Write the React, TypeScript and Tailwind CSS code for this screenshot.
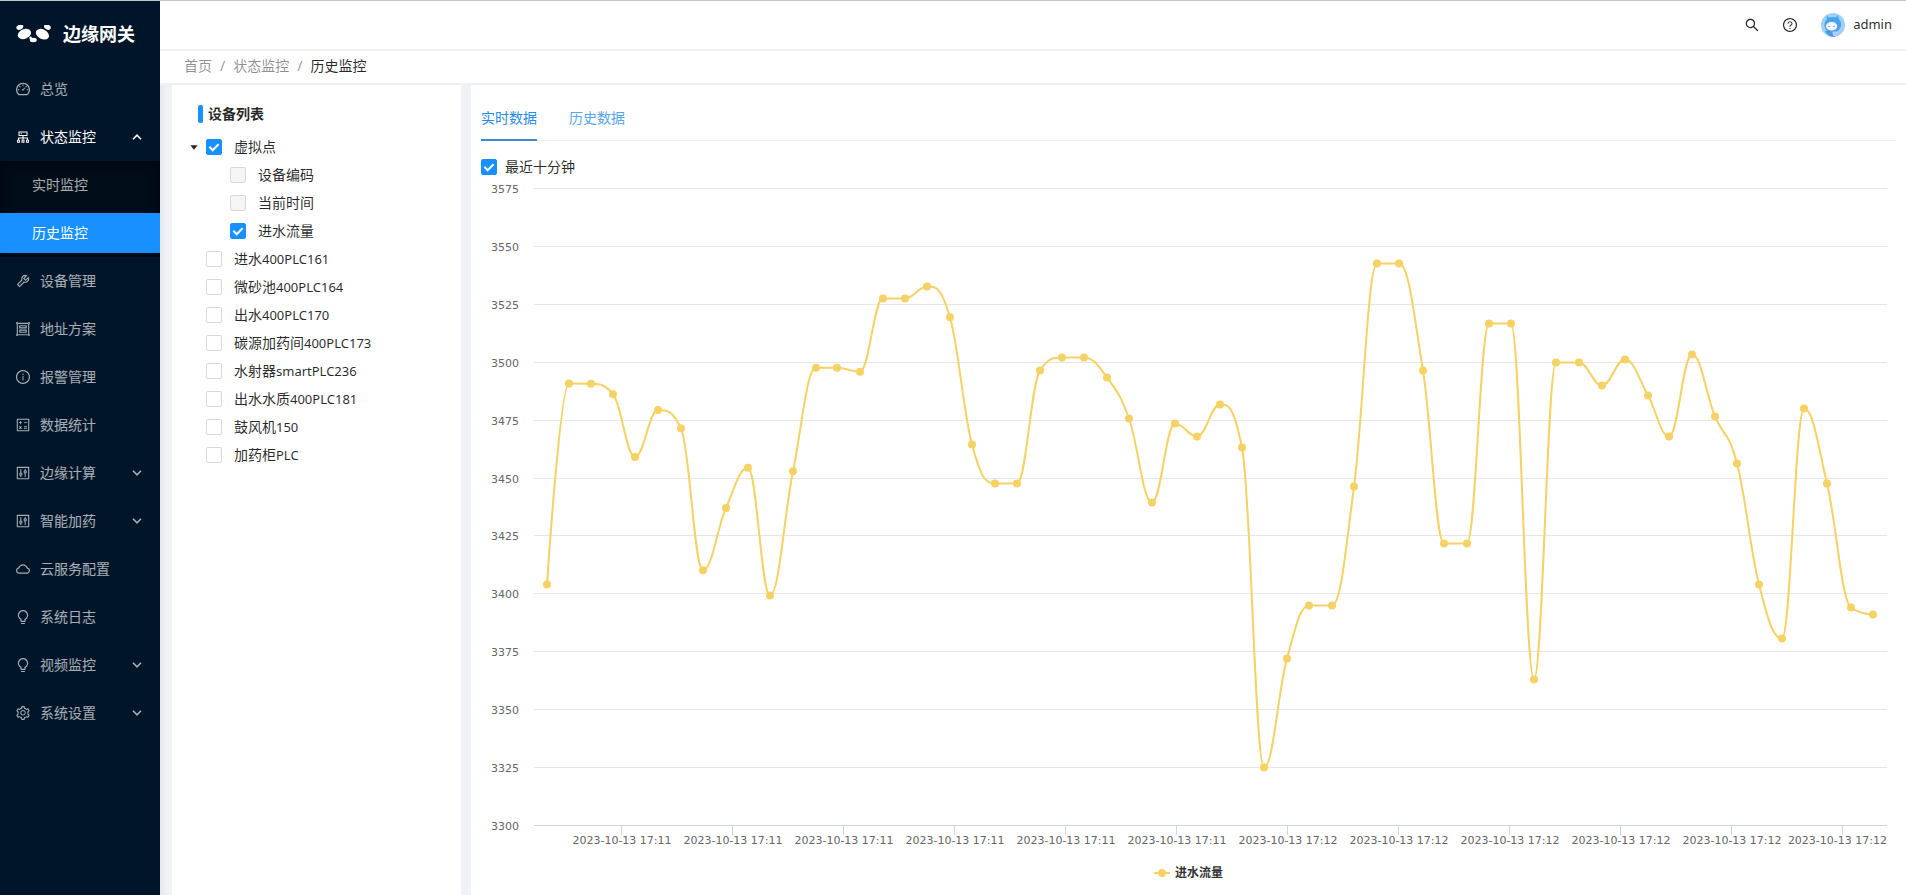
import { useState } from "react";
import type { IconType } from "react-icons";
import {
  AiOutlineBulb,
  AiOutlineCalculator,
  AiOutlineCloud,
  AiOutlineCluster,
  AiOutlineControl,
  AiOutlineDashboard,
  AiOutlineGroup,
  AiOutlineInfoCircle,
  AiOutlineQuestionCircle,
  AiOutlineSearch,
  AiOutlineSetting,
  AiOutlineTool,
} from "react-icons/ai";

type MenuItem = {
  label: string;
  icon: IconType;
  expandable?: boolean;
  open?: boolean;
  children?: { label: string; active?: boolean }[];
};

const menu: MenuItem[] = [
  { label: "总览", icon: AiOutlineDashboard },
  {
    label: "状态监控",
    icon: AiOutlineCluster,
    expandable: true,
    open: true,
    children: [{ label: "实时监控" }, { label: "历史监控", active: true }],
  },
  { label: "设备管理", icon: AiOutlineTool },
  { label: "地址方案", icon: AiOutlineGroup },
  { label: "报警管理", icon: AiOutlineInfoCircle },
  { label: "数据统计", icon: AiOutlineCalculator },
  { label: "边缘计算", icon: AiOutlineControl, expandable: true },
  { label: "智能加药", icon: AiOutlineControl, expandable: true },
  { label: "云服务配置", icon: AiOutlineCloud },
  { label: "系统日志", icon: AiOutlineBulb },
  { label: "视频监控", icon: AiOutlineBulb, expandable: true },
  { label: "系统设置", icon: AiOutlineSetting, expandable: true },
];

type Device = {
  id: string;
  name: string;
  code?: string;
  child?: boolean;
  expanded?: boolean;
  checked?: boolean;
  disabled?: boolean;
};

const devices: Device[] = [
  { id: "virtual", name: "虚拟点", expanded: true, checked: true },
  { id: "device-code", name: "设备编码", child: true, disabled: true },
  { id: "current-time", name: "当前时间", child: true, disabled: true },
  { id: "inflow", name: "进水流量", child: true, checked: true },
  { id: "plc161", name: "进水", code: "400PLC161" },
  { id: "plc164", name: "微砂池", code: "400PLC164" },
  { id: "plc170", name: "出水", code: "400PLC170" },
  { id: "plc173", name: "碳源加药间", code: "400PLC173" },
  { id: "plc236", name: "水射器", code: "smartPLC236" },
  { id: "plc181", name: "出水水质", code: "400PLC181" },
  { id: "fan150", name: "鼓风机", code: "150" },
  { id: "dosing", name: "加药柜", code: "PLC" },
];

// [x offset in the plot, flow value]
const series: [number, number][] = [
  [66, 3403.8], [88, 3490.6], [110, 3490.5], [132, 3486], [154, 3458.9],
  [177, 3479.2], [200, 3471.3], [222, 3410], [245, 3436.9], [267, 3454.2],
  [289, 3399.1], [312, 3452.7], [335, 3497.4], [356, 3497.4], [379, 3495.7],
  [402, 3527.3], [424, 3527.3], [446, 3532.5], [469, 3519.2], [491, 3464.3],
  [514, 3447.4], [536, 3447.4], [559, 3496.2], [581, 3501.8], [603, 3501.8],
  [626, 3493.2], [648, 3475.5], [671, 3439.2], [694, 3473.3], [716, 3467.7],
  [739, 3481.5], [761, 3463], [783, 3324.8], [806, 3371.9], [828, 3394.8],
  [851, 3394.8], [873, 3446.1], [896, 3542.4], [918, 3542.4], [942, 3496.2],
  [963, 3421.5], [986, 3421.5], [1008, 3516.5], [1030, 3516.5], [1053, 3362.8],
  [1075, 3499.7], [1098, 3499.7], [1121, 3489.7], [1144, 3501], [1167, 3485.4],
  [1188, 3467.7], [1211, 3503.1], [1234, 3476.4], [1256, 3456.1], [1278, 3403.8],
  [1301, 3380.5], [1323, 3479.8], [1346, 3447.4], [1370, 3393.9], [1392, 3390.9],
];

const yTicks = [3575, 3550, 3525, 3500, 3475, 3450, 3425, 3400, 3375, 3350, 3325, 3300];

const xTicks = Array.from({ length: 12 }, (_, i) => ({
  x: 140 + i * 111,
  label: i < 6 ? "2023-10-13 17:11" : "2023-10-13 17:12",
}));

const PLOT = { left: 53, right: 1406, top: 11, bottom: 648 };

const yOf = (value: number) =>
  PLOT.top + ((3575 - value) / 275) * (PLOT.bottom - PLOT.top);

// Cubic spline whose control points never overshoot the neighbouring values
function splinePath(pts: [number, number][]) {
  let d = `M ${pts[0][0]} ${pts[0][1]}`;
  let prevRight = pts[0];
  for (let i = 1; i < pts.length; i++) {
    const [x, y] = pts[i];
    let left: [number, number] = [x, y];
    let right: [number, number] = [x, y];
    if (i < pts.length - 1) {
      const [lx, ly] = pts[i - 1];
      const [nx, ny] = pts[i + 1];
      const leftX = (1.5 * x + lx) / 2.5;
      let leftY = (1.5 * y + ly) / 2.5;
      const rightX = (1.5 * x + nx) / 2.5;
      let rightY = (1.5 * y + ny) / 2.5;
      const correction =
        ((rightY - leftY) * (rightX - x)) / (rightX - leftX) + y - rightY;
      leftY += correction;
      rightY += correction;
      if (leftY > ly && leftY > y) {
        leftY = Math.max(ly, y);
        rightY = 2 * y - leftY;
      } else if (leftY < ly && leftY < y) {
        leftY = Math.min(ly, y);
        rightY = 2 * y - leftY;
      }
      if (rightY > ny && rightY > y) {
        rightY = Math.max(ny, y);
        leftY = 2 * y - rightY;
      } else if (rightY < ny && rightY < y) {
        rightY = Math.min(ny, y);
        leftY = 2 * y - rightY;
      }
      left = [leftX, leftY];
      right = [rightX, rightY];
    }
    d += ` C ${prevRight[0]} ${prevRight[1]} ${left[0]} ${left[1]} ${x} ${y}`;
    prevRight = right;
  }
  return d;
}

function Logo() {
  return (
    <svg width="36" height="18" viewBox="0 0 36 18" fill="#fff" aria-hidden="true">
      <ellipse cx="3.8" cy="2.2" rx="3.6" ry="2.5" transform="rotate(-22 3.8 2.2)" />
      <ellipse cx="8.4" cy="9" rx="6.9" ry="4.8" transform="rotate(-22 8.4 9)" />
      <ellipse cx="31.4" cy="2" rx="3.6" ry="2.5" transform="rotate(26 31.4 2)" />
      <ellipse cx="26.4" cy="9.2" rx="7" ry="4.8" transform="rotate(28 26.4 9.2)" />
      <circle cx="14.6" cy="12.9" r="1.3" />
      <ellipse cx="17.3" cy="15" rx="3.5" ry="2.2" />
    </svg>
  );
}

function Avatar() {
  return (
    <svg width="24" height="24" viewBox="0 0 24 24" aria-hidden="true">
      <circle cx="12" cy="12" r="12" fill="#9fd0fa" />
      <path d="M6 2.200l2 2.600c2.200-1 5-1 7-.2l1.800-2.600 1 4c1.800 1.800 2.600 4 2.200 6.400-.4 2.800-2 4.800-4.200 6H7c-2.200-1.400-3.500-3.600-3.500-6.400 0-2.200.7-4 2.100-5.600z" fill="#45a4f2" />
      <path d="M4 18.600c2-1.400 4.400-1 6.200-.2l5 .6c0 1.800-.6 3.200-1.700 4.900-3.700.4-7.200-1.500-9.500-5.300z" fill="#4a9be8" />
      <ellipse cx="10.6" cy="13.2" rx="6" ry="4.700" fill="#f1f5fd" stroke="#4f86d8" strokeWidth=".6" />
      <path d="M7.200 13.200q.9 1 1.800 0M12 13.200q.9 1 1.800 0" stroke="#6b8fd0" strokeWidth=".8" fill="none" />
      <path d="M11.500 19.200c1.800-.8 3.600-.8 5 0l-.4 3c-1.400.8-2.600 1-4 .8z" fill="#b4cdf6" />
    </svg>
  );
}

function Chevron({ up }: { up?: boolean }) {
  return (
    <svg width="10" height="6" viewBox="0 0 10 6" fill="none" stroke="currentColor" strokeWidth="1.6" aria-hidden="true">
      <path d={up ? "M1 5.2l4-4 4 4" : "M1 .8l4 4 4-4"} />
    </svg>
  );
}

function CheckBox({
  id,
  defaultChecked,
  disabled,
}: {
  id: string;
  defaultChecked?: boolean;
  disabled?: boolean;
}) {
  return (
    <span className="grid size-4 shrink-0">
      <input
        id={id}
        type="checkbox"
        defaultChecked={defaultChecked}
        disabled={disabled}
        className="peer col-start-1 row-start-1 size-4 appearance-none rounded-[2px] border border-[#d9d9d9] bg-white checked:border-[#1890ff] checked:bg-[#1890ff] disabled:bg-[#f5f5f5]"
      />
      <svg
        viewBox="0 0 16 16"
        className="pointer-events-none invisible col-start-1 row-start-1 size-4 peer-checked:visible"
        fill="none"
        stroke="#fff"
        strokeWidth="2"
        aria-hidden="true"
      >
        <path d="M3.4 7.8l3.200 3.400 6-6" />
      </svg>
    </span>
  );
}

function Sidebar() {
  return (
    <aside className="w-40 shrink-0 bg-[#001529] text-sm text-white/65">
      <div className="flex h-16 items-center gap-[11px] pt-0.5 pl-4 text-white">
        <Logo />
        <h1 className="text-lg font-bold">边缘网关</h1>
      </div>
      <nav>
        <ul className="flex flex-col">
          {menu.map((item) => {
            const Icon = item.icon;
            return (
              <li key={item.label} className="flex flex-col">
                <a
                  href="#"
                  className={
                    item.open
                      ? "my-1 flex h-10 items-center gap-[9px] px-[15px] text-white"
                      : "my-1 flex h-10 items-center gap-[9px] px-[15px]"
                  }
                >
                  <Icon className="size-4" />
                  <span className="flex-1">{item.label}</span>
                  {item.expandable && (
                    <span className="pr-[3px]">
                      <Chevron up={item.open} />
                    </span>
                  )}
                </a>
                {item.children && (
                  <ul className="flex flex-col bg-[#000c17] shadow-[inset_0_2px_8px_rgba(0,0,0,0.45)]">
                    {item.children.map((child) => (
                      <li key={child.label} className="py-1">
                        <a
                          href="#"
                          className={
                            child.active
                              ? "flex h-10 items-center bg-[#1890ff] pl-8 text-white"
                              : "flex h-10 items-center pl-8"
                          }
                        >
                          {child.label}
                        </a>
                      </li>
                    ))}
                  </ul>
                )}
              </li>
            );
          })}
        </ul>
      </nav>
    </aside>
  );
}

function DeviceTree() {
  return (
    <section className="w-[289px] shrink-0 bg-white pt-5">
      <h2 className="flex h-[18px] items-center gap-[5px] pl-[26px] text-sm font-bold text-black/85">
        <span className="h-[18px] w-[5px] rounded-[2px] bg-[#1890ff]" />
        设备列表
      </h2>
      <ul className="flex flex-col gap-1 pt-3 pl-2.5">
        {devices.map((d) => (
          <li
            key={d.id}
            className={d.child ? "flex h-6 items-center pl-12" : "flex h-6 items-center"}
          >
            {!d.child && (
              <span className="flex w-6 justify-center">
                {d.expanded && (
                  <svg width="8" height="5" viewBox="0 0 8 5" fill="#262626" aria-hidden="true">
                    <path d="M.4.3h7.200L4.400 4.300a.6.6 0 0 1-.8 0z" />
                  </svg>
                )}
              </span>
            )}
            <CheckBox id={d.id} defaultChecked={d.checked} disabled={d.disabled} />
            <label htmlFor={d.id} className="pl-3 text-sm leading-6 text-black/85">
              {d.name}
              {d.code && <span className="text-[13px]">{d.code}</span>}
            </label>
          </li>
        ))}
      </ul>
    </section>
  );
}

function FlowChart() {
  const pts = series.map(([x, v]): [number, number] => [x, yOf(v)]);
  return (
    <svg viewBox="0 0 1415 710" className="block w-full" role="img" aria-label="进水流量">
      {yTicks.map((v) => {
        const y = Math.round(yOf(v)) + 0.5;
        return (
          <g key={v}>
            <path
              d={`M ${PLOT.left} ${y} H ${PLOT.right}`}
              stroke={v === 3300 ? "#ccd6eb" : "#e6e6e6"}
            />
            <text x="38" y={y + 4} textAnchor="end" className="fill-[#666] font-['DejaVu_Sans'] text-[11px]">
              {v}
            </text>
          </g>
        );
      })}
      {xTicks.map((t, i) => {
        const last = i === xTicks.length - 1;
        return (
          <g key={t.x}>
            <path d={`M ${t.x + 0.5} 649 V 658`} stroke="#ccd6eb" />
            <text
              x={last ? PLOT.right : t.x + 1}
              y="667"
              textAnchor={last ? "end" : "middle"}
              className="fill-[#666] font-['DejaVu_Sans'] text-[11px]"
            >
              {t.label}
            </text>
          </g>
        );
      })}
      <path d={splinePath(pts)} fill="none" stroke="#f6d163" strokeWidth="2" strokeLinejoin="round" />
      {pts.map(([x, y]) => (
        <circle key={x} cx={x} cy={y} r="4" fill="#f6d163" />
      ))}
      <path d="M673 696H689" stroke="#f6d163" strokeWidth="2" />
      <circle cx="681" cy="696" r="4" fill="#f6d163" />
      <text x="694" y="700" className="fill-[#333] text-xs font-bold">
        进水流量
      </text>
    </svg>
  );
}

function HistoryPanel() {
  const [tab, setTab] = useState("实时数据");
  return (
    <section className="min-w-0 flex-1 bg-white px-2.5 pt-2.5">
      <div role="tablist" className="flex gap-8 border-b border-[#f0f0f0] text-sm">
        {["实时数据", "历史数据"].map((name) => (
          <button
            key={name}
            type="button"
            role="tab"
            aria-selected={tab === name}
            onClick={() => setTab(name)}
            className={
              tab === name
                ? "-mb-px h-[46px] border-b-2 border-[#3a8ad2] pt-0.5 text-[#2a8be6]"
                : "-mb-px h-[46px] border-b-2 border-transparent pt-0.5 text-[#57a5ee]"
            }
          >
            {name}
          </button>
        ))}
      </div>
      <div className="flex items-center gap-2 pt-4">
        <CheckBox id="last-ten" defaultChecked />
        <label htmlFor="last-ten" className="text-sm text-black/85">
          最近十分钟
        </label>
      </div>
      <FlowChart />
    </section>
  );
}

export default function App() {
  return (
    <div className="flex h-screen min-h-[720px] overflow-hidden border-t border-[#b9cac9] bg-[#f0f2f5] font-['Noto_Sans','Noto_Sans_CJK_SC',sans-serif]">
      <Sidebar />
      <div className="flex min-w-0 flex-1 flex-col">
        <header className="flex h-12 items-center justify-end bg-white pr-3.5 text-black/85">
          <button type="button" aria-label="搜索" className="px-[11px]">
            <AiOutlineSearch className="size-4" />
          </button>
          <button type="button" aria-label="帮助" className="px-[11px]">
            <AiOutlineQuestionCircle className="size-4" />
          </button>
          <button type="button" className="flex items-center gap-2 pl-3 text-[13px]">
            <Avatar />
            admin
          </button>
        </header>
        <div className="flex h-9 items-center gap-2 border-t-2 border-b-2 border-[#f0f1f3] bg-white pb-0.5 pl-6 text-sm text-black/45">
          <a href="#">首页</a>
          <span>/</span>
          <a href="#">状态监控</a>
          <span>/</span>
          <span className="text-black/85">历史监控</span>
        </div>
        <main className="flex min-h-0 flex-1 gap-2.5 bg-linear-to-r from-[#e6e8ed] to-[#f0f2f5] to-[8px] pl-3">
          <DeviceTree />
          <HistoryPanel />
        </main>
      </div>
    </div>
  );
}
